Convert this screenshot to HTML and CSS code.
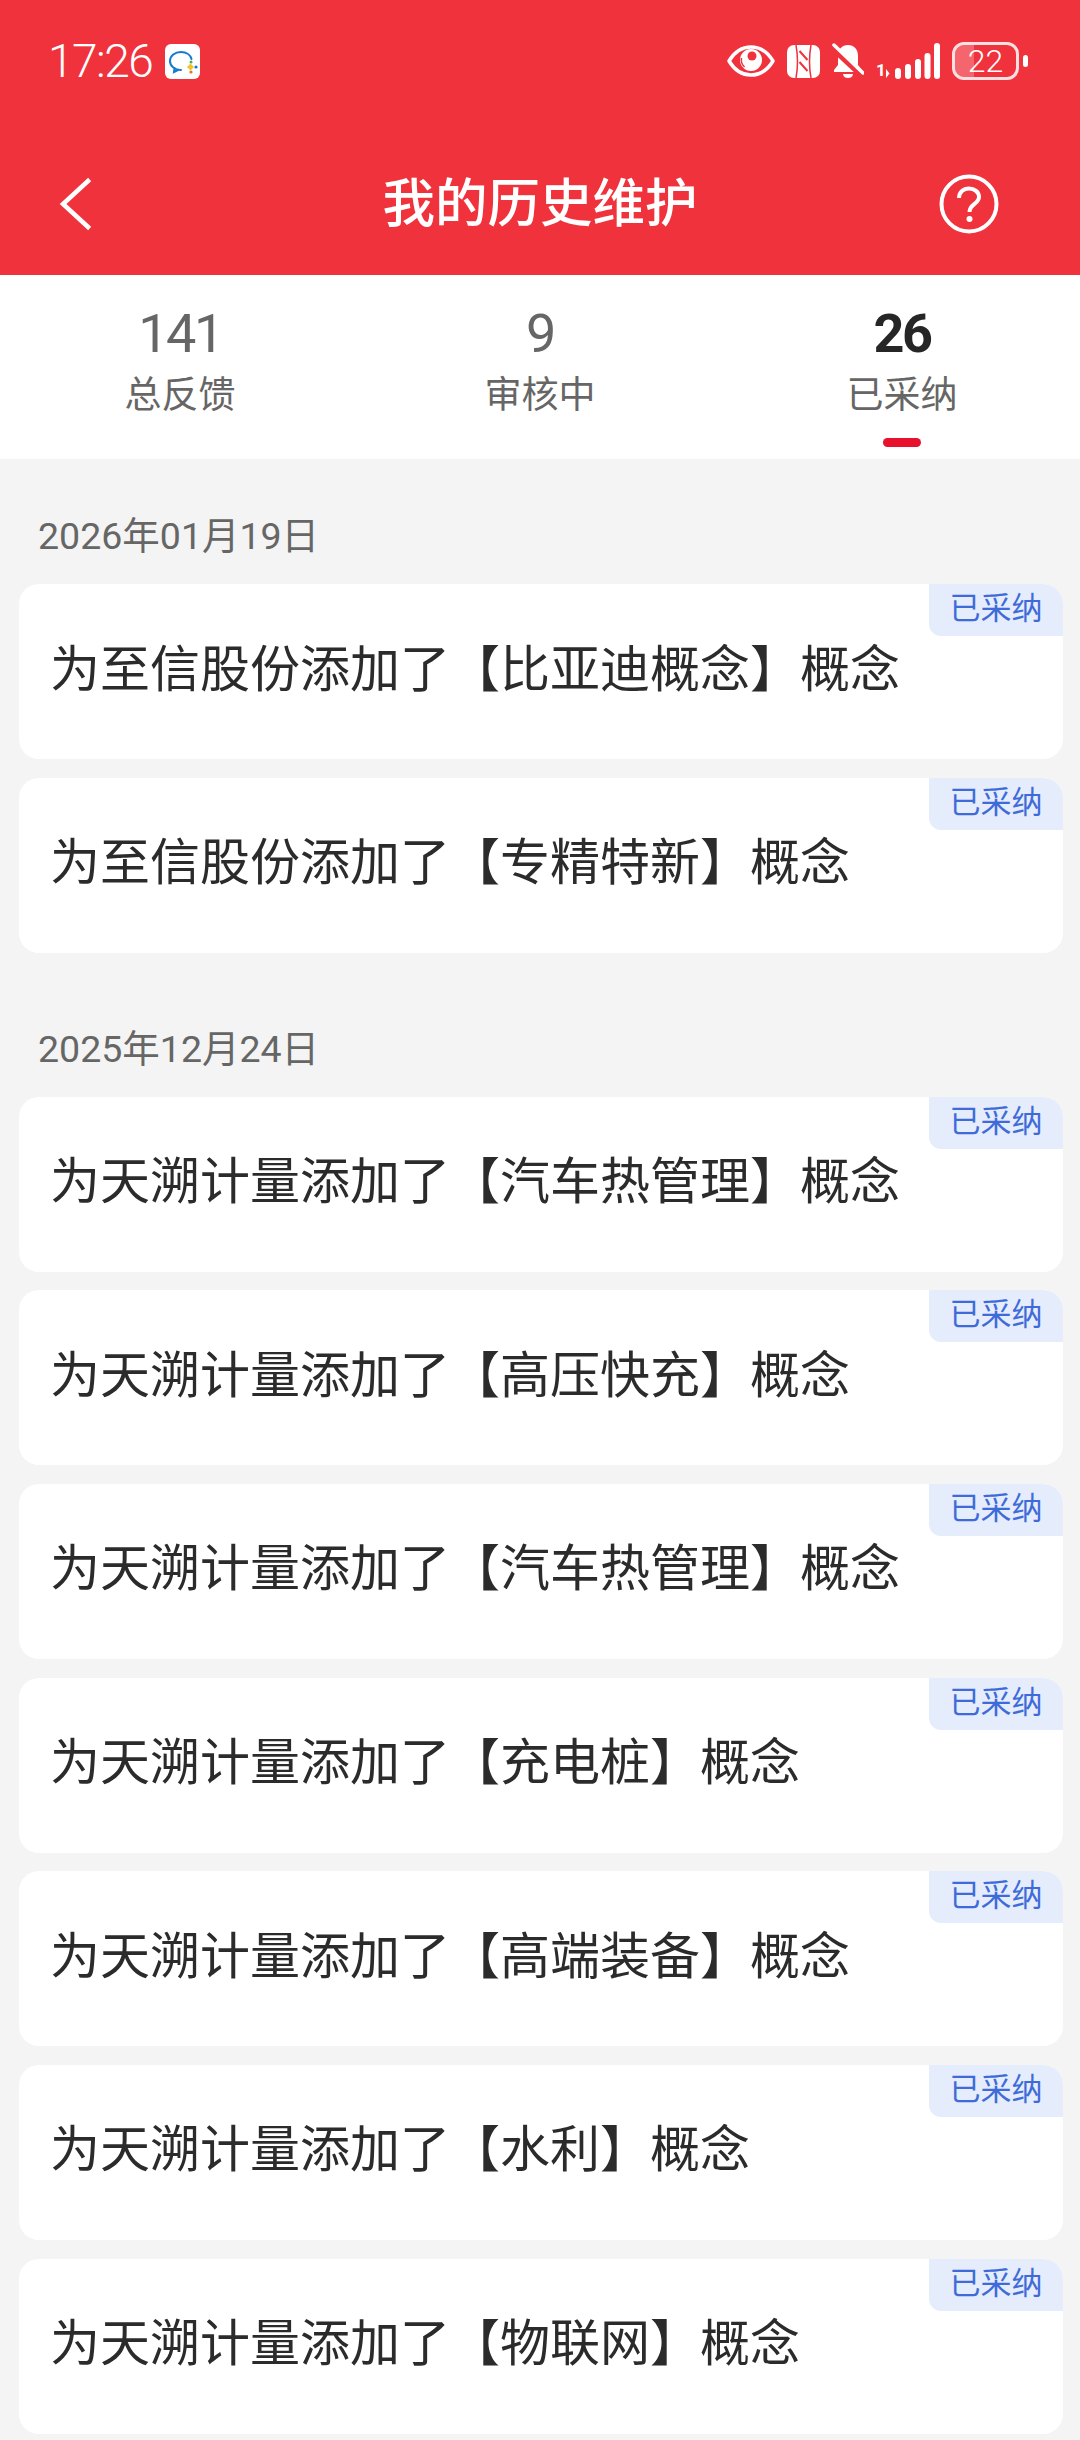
FILE: index.html
```html
<!DOCTYPE html>
<html lang="zh-CN">

<head>
    <meta charset="UTF-8">
    <meta name="viewport" content="width=device-width, initial-scale=1.0">
    <title>我的历史维护</title>
    <link rel="stylesheet" href="styles.css">
</head>

<body>
    <header class="header">
        <div class="statusbar">
            <div class="status-left">
                <span class="time">17:26</span>
                <svg class="app-icon" width="35" height="35" viewBox="0 0 35 35">
                    <rect width="35" height="35" rx="6" fill="#fff" />
                    <path d="M16 26c-6 0-11-3.500-11-9s5-9 11-9c5.500 0 9.500 3 10.500 7M9.500 24l-.5 4 5-2.300" fill="none" stroke="#1479d2" stroke-width="2" stroke-linecap="round" />
                    <path d="M25.500 19.500l3.500 3.500-3.500 3.500-3.500-3.500z" fill="#f2c230" />
                    <circle cx="31" cy="23" r="1.600" fill="#1479d2" />
                    <circle cx="26" cy="28" r="1.600" fill="#e5732a" />
                    <circle cx="26" cy="18" r="1.500" fill="#4fae4e" />
                </svg>
            </div>
            <div class="status-right">
                <svg width="48" height="32" viewBox="0 0 48 32">
                    <path d="M2 16C8 6 15 2 24 2s16 4 22 14c-6 10-13 14-22 14S8 26 2 16z" fill="none" stroke="#fff" stroke-width="3.500" stroke-linejoin="round" />
                    <circle cx="24" cy="15" r="11" fill="#fff" />
                    <circle cx="25" cy="11" r="4.500" fill="#f0323c" />
                    <path d="M14.500 13a10 10 0 0 0 3 9" fill="none" stroke="#f0323c" stroke-width="1.500" />
                </svg>
                <svg width="33" height="33" viewBox="0 0 33 33">
                    <rect width="33" height="33" rx="7" fill="#fff" />
                    <path d="M9 0c2 11 2 22 0 33M24 0c-2 11-2 22 0 33" fill="none" stroke="#f0323c" stroke-width="1.500" />
                    <path d="M12.500 6l8 9M12.500 17l8 9" fill="none" stroke="#f0323c" stroke-width="2" />
                </svg>
                <svg width="32" height="36" viewBox="0 0 32 36">
                    <path d="M16 2c6 0 10 4 10 11v9l4 5v2H2v-2l4-5v-9C6 6 10 2 16 2z" fill="#fff" />
                    <path d="M11 31h10c-.5 3-2.500 4-5 4s-4.500-1-5-4z" fill="#fff" />
                    <path d="M0 4l30 28" stroke="#f0323c" stroke-width="7" />
                    <path d="M2 2l29 28" stroke="#fff" stroke-width="3.500" stroke-linecap="round" />
                </svg>
                <div class="signal">
                    <span class="signal-type">1</span>
                    <svg width="54" height="36" viewBox="0 0 54 36">
                        <path d="M0 35v-9l3.500 4.500z" fill="#fff" />
                        <rect x="9" y="25" width="6" height="11" rx="3" fill="#fff" />
                        <rect x="19" y="21" width="6" height="15" rx="3" fill="#fff" />
                        <rect x="29" y="16" width="6" height="20" rx="3" fill="#fff" />
                        <rect x="38.500" y="10" width="6" height="26" rx="3" fill="#fff" />
                        <rect x="48" y="0" width="6" height="36" rx="3" fill="#fff" />
                    </svg>
                </div>
                <div class="battery">
                    <div class="battery-body">
                        <div class="battery-fill"></div>
                        <span class="battery-text">22</span>
                    </div>
                    <div class="battery-nub"></div>
                </div>
            </div>
        </div>
        <nav class="nav">
            <svg class="nav-back" width="40" height="60" viewBox="0 0 40 60">
                <path d="M32 7L7 30l25 23" fill="none" stroke="#fff" stroke-width="4.500" stroke-linecap="square" />
            </svg>
            <h1 class="nav-title">我的历史维护</h1>
            <svg class="nav-help" width="64" height="64" viewBox="0 0 64 64">
                <circle cx="32" cy="32" r="27.500" fill="none" stroke="#fff" stroke-width="4" />
                <path d="M22 26c0-6 4.500-9.500 10-9.500s10 3.500 10 8.500c0 7-9.500 7-9.500 15" fill="none" stroke="#fff" stroke-width="4" />
                <circle cx="32.500" cy="47" r="3" fill="#fff" />
            </svg>
        </nav>
    </header>

    <section class="tabs">
        <div class="tab">
            <div class="tab-num">141</div>
            <div class="tab-label">总反馈</div>
        </div>
        <div class="tab">
            <div class="tab-num">9</div>
            <div class="tab-label">审核中</div>
        </div>
        <div class="tab active">
            <div class="tab-num">26</div>
            <div class="tab-label">已采纳</div>
            <div class="tab-line"></div>
        </div>
    </section>

    <main>
        <section class="group">
            <div class="date">2026年01月19日</div>
            <div class="card-list">
                <div class="card">为至信股份添加了【比亚迪概念】概念<span class="badge">已采纳</span></div>
                <div class="card">为至信股份添加了【专精特新】概念<span class="badge">已采纳</span></div>
            </div>
        </section>
        <section class="group">
            <div class="date">2025年12月24日</div>
            <div class="card-list">
                <div class="card">为天溯计量添加了【汽车热管理】概念<span class="badge">已采纳</span></div>
                <div class="card">为天溯计量添加了【高压快充】概念<span class="badge">已采纳</span></div>
                <div class="card">为天溯计量添加了【汽车热管理】概念<span class="badge">已采纳</span></div>
                <div class="card">为天溯计量添加了【充电桩】概念<span class="badge">已采纳</span></div>
                <div class="card">为天溯计量添加了【高端装备】概念<span class="badge">已采纳</span></div>
                <div class="card">为天溯计量添加了【水利】概念<span class="badge">已采纳</span></div>
                <div class="card">为天溯计量添加了【物联网】概念<span class="badge">已采纳</span></div>
            </div>
        </section>
    </main>
</body>

</html>
```

FILE: styles.css
```css
* {
    box-sizing: border-box;
}

body {
    font-family: Roboto, "Noto Sans CJK SC", sans-serif;
    margin: 0;
    height: 2440px;
    overflow: hidden;
    background-color: #f4f4f4;
}

.header {
    background-color: #f0323c;
    color: #fff;
    height: 275px;
}

.statusbar {
    height: 122px;
    display: flex;
    justify-content: space-between;
    align-items: center;
    padding: 0 52px 0 48px;
}

.status-left {
    display: flex;
    align-items: center;
    gap: 13px;
}

.time {
    font-size: 46px;
    font-weight: 300;
    letter-spacing: -1.5px;
    line-height: 46px;
}

.status-right {
    display: flex;
    align-items: center;
    gap: 12px;
}

.signal {
    display: flex;
    align-items: flex-end;
    width: 64px;
    height: 36px;
}

.signal-type {
    width: 10px;
    font-size: 17px;
    font-weight: 700;
    line-height: 17px;
}

.battery {
    display: flex;
    align-items: center;
    gap: 4px;
}

.battery-body {
    position: relative;
    width: 67px;
    height: 38px;
    border: 3px solid rgba(255, 255, 255, 0.85);
    border-radius: 12px;
    display: flex;
    align-items: center;
    justify-content: center;
    overflow: hidden;
}

.battery-fill {
    position: absolute;
    left: 0;
    top: 0;
    bottom: 0;
    width: 19px;
    background-color: rgba(255, 255, 255, 0.25);
}

.battery-text {
    position: relative;
    font-size: 32px;
    font-weight: 300;
    line-height: 32px;
}

.battery-nub {
    width: 5px;
    height: 12px;
    border-radius: 3px;
    background-color: #fff;
}

.nav {
    height: 153px;
    padding: 10px 56px 0;
    display: grid;
    grid-template-columns: 1fr auto 1fr;
    align-items: center;
}

.nav-title {
    margin: 0;
    font-size: 52.5px;
    font-weight: 500;
    line-height: 60px;
}

.nav-help {
    justify-self: end;
    margin-right: 23px;
}

.tabs {
    height: 184px;
    background-color: #fff;
    display: grid;
    grid-template-columns: repeat(3, 1fr);
    padding-top: 29px;
}

.tab {
    display: flex;
    flex-direction: column;
    align-items: center;
    color: #666;
}

.tab-num {
    font-size: 54px;
    line-height: 60px;
    margin-bottom: 6px;
    letter-spacing: -2.5px;
}

.tab-label {
    font-size: 37px;
    line-height: 52px;
}

.tab.active {
    padding-left: 4px;
}

.tab.active .tab-num {
    font-weight: 700;
    color: #262626;
}

.tab-line {
    width: 38px;
    height: 9px;
    margin-top: 16px;
    border-radius: 5px;
    background-color: #e8112d;
}

.group {
    padding: 52px 17px 19px 19px;
}

.date {
    padding-left: 19px;
    margin-bottom: 23px;
    font-size: 37.5px;
    line-height: 50px;
    color: #666;
}

.card-list {
    display: flex;
    flex-direction: column;
    gap: 18.67px;
}

.card {
    position: relative;
    height: 175px;
    padding: 0 31px 14px;
    display: flex;
    align-items: center;
    background-color: #fff;
    border-radius: 20px;
    font-size: 50px;
    color: #2b2b2b;
}

.badge {
    position: absolute;
    top: 0;
    right: 0;
    width: 134px;
    height: 52px;
    padding-bottom: 9px;
    display: flex;
    align-items: center;
    justify-content: center;
    background-color: #e5edfd;
    border-radius: 0 20px 0 12px;
    font-size: 31px;
    color: #3f6bd8;
}
```
